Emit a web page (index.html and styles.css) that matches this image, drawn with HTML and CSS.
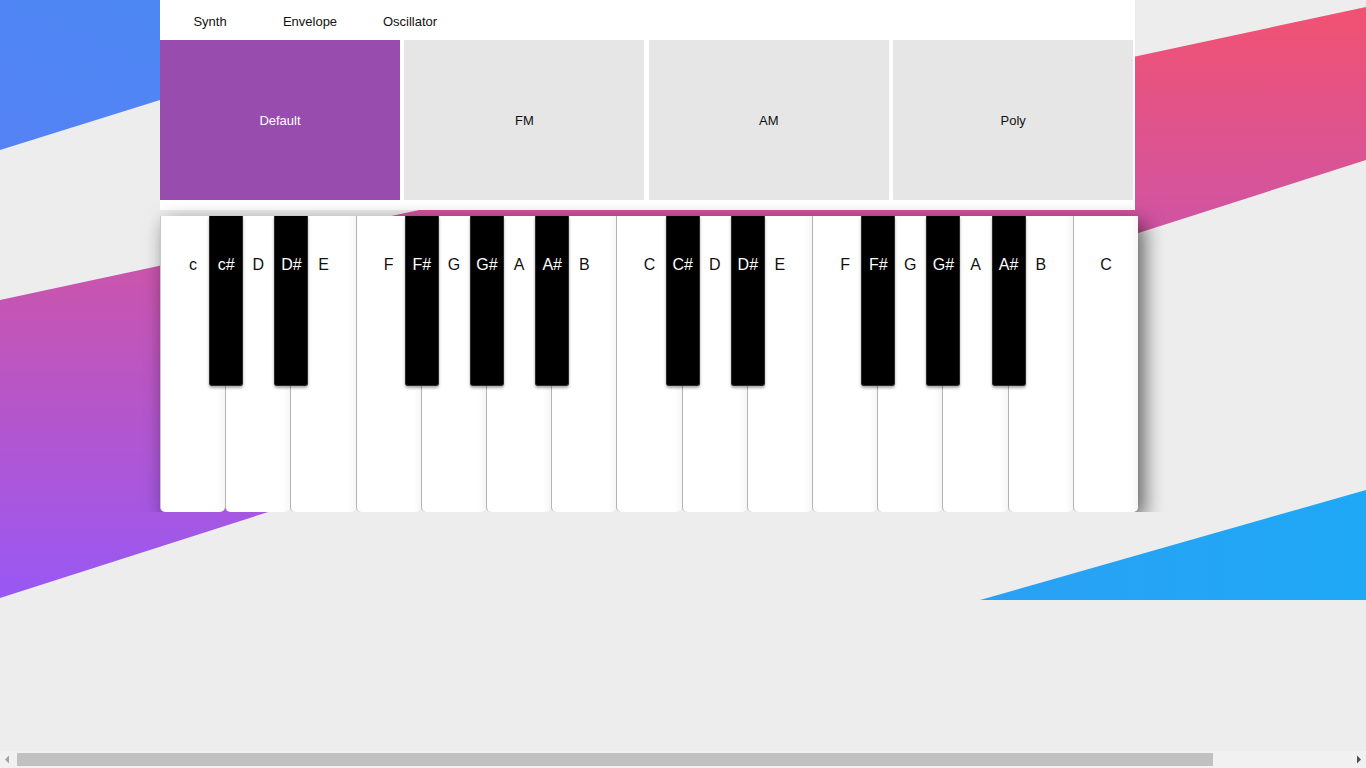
FILE: index.html
```html
<!DOCTYPE html>
<html lang="en">
<head>
<meta charset="utf-8">
<title>Synth</title>
<link rel="stylesheet" href="styles.css">
</head>
<body>
<div class="backdrop">
  <div class="band band-blue-top"></div>
  <div class="band band-pink"></div>
  <div class="band band-blue-bottom"></div>
</div>
<div class="page">
  <div class="panel">
    <nav class="tabs">
      <div class="tab">Synth</div>
      <div class="tab">Envelope</div>
      <div class="tab">Oscillator</div>
    </nav>
    <div class="presets">
      <button class="preset active">Default</button>
      <button class="preset">FM</button>
      <button class="preset">AM</button>
      <button class="preset">Poly</button>
    </div>
  </div>
  <div class="piano">
    <div class="white"><span class="label">c</span><div class="black"><span class="label">c#</span></div></div>
    <div class="white"><span class="label">D</span><div class="black"><span class="label">D#</span></div></div>
    <div class="white"><span class="label">E</span></div>
    <div class="white"><span class="label">F</span><div class="black"><span class="label">F#</span></div></div>
    <div class="white"><span class="label">G</span><div class="black"><span class="label">G#</span></div></div>
    <div class="white"><span class="label">A</span><div class="black"><span class="label">A#</span></div></div>
    <div class="white"><span class="label">B</span></div>
    <div class="white"><span class="label">C</span><div class="black"><span class="label">C#</span></div></div>
    <div class="white"><span class="label">D</span><div class="black"><span class="label">D#</span></div></div>
    <div class="white"><span class="label">E</span></div>
    <div class="white"><span class="label">F</span><div class="black"><span class="label">F#</span></div></div>
    <div class="white"><span class="label">G</span><div class="black"><span class="label">G#</span></div></div>
    <div class="white"><span class="label">A</span><div class="black"><span class="label">A#</span></div></div>
    <div class="white"><span class="label">B</span></div>
    <div class="white"><span class="label">C</span></div>
  </div>
</div>
<div class="hscroll">
  <div class="hscroll-btn">
    <svg width="17" height="17" viewBox="0 0 17 17"><polygon points="5,8.5 9,4.5 9,12.5" fill="#a3a3a3"/></svg>
  </div>
  <div class="hscroll-track"><div class="hscroll-thumb"></div></div>
  <div class="hscroll-btn">
    <svg width="17" height="17" viewBox="0 0 17 17"><polygon points="8,4.5 12,8.5 8,12.5" fill="#505050"/></svg>
  </div>
</div>
</body>
</html>
```

FILE: styles.css
```css
html {
  background: #ededed;
}
body {
  margin: 0;
  font-family: "Liberation Sans", Arial, sans-serif;
  color: #111;
}
.backdrop {
  position: absolute;
  left: 0;
  top: 0;
  width: 1366px;
  height: 600px;
  z-index: 0;
}
.band {
  position: absolute;
  inset: 0;
}
.band-blue-top {
  background: linear-gradient(to top right, #6676f6 0%, #3896f2 100%);
  clip-path: polygon(0 0, 480px 0, 0 150px);
}
.band-pink {
  background: linear-gradient(to bottom, #f25270 0%, #9858f5 100%);
  clip-path: polygon(0 300px, 1366px 7px, 1366px 160px, 0 598px);
}
.band-blue-bottom {
  background: linear-gradient(to right, #4a8cf0 0%, #1ea8f5 100%);
  clip-path: polygon(980px 600px, 1366px 490px, 1366px 600px);
}
.page {
  position: relative;
  z-index: 1;
  padding-left: 160px;
}
.panel {
  width: 975px;
  background: #fff;
  padding-bottom: 10px;
}
.tabs {
  display: flex;
  height: 40px;
}
.tab {
  width: 100px;
  font-size: 13px;
  line-height: 43px;
  text-align: center;
  color: #111;
}
.presets {
  display: flex;
  gap: 4.4px;
}
.preset {
  width: 240px;
  height: 160px;
  border: 0;
  margin: 0;
  padding: 0;
  background: #e6e6e6;
  font-family: "Liberation Sans", Arial, sans-serif;
  font-size: 13px;
  color: #111;
}
.preset.active {
  background: #974cae;
  color: #fff;
}
.piano {
  display: flex;
  width: 978px;
  height: 296px;
  margin-top: 6px;
  box-shadow: 6px 7px 20px rgba(0, 0, 0, 0.6);
  border-radius: 0 0 5px 5px;
}
.white {
  position: relative;
  flex: 1 1 0;
  box-sizing: border-box;
  border-left: 1px solid #b4b4b4;
  border-radius: 0 0 5px 5px;
  background: linear-gradient(to right, #fff 0%, #fff 88%, #f6f6f6 100%);
  text-align: center;
}
.white:first-child {
  border-left-color: #c8c8c8;
}
.label {
  display: block;
  padding-top: 40px;
  font-size: 16px;
  line-height: 18px;
}
.black {
  position: absolute;
  top: 0;
  right: -18px;
  width: 34px;
  height: 170px;
  box-sizing: border-box;
  background: #000;
  border: 1px solid #2a2a2a;
  border-top: 0;
  border-radius: 0 0 3px 3px;
  box-shadow: 0 2px 3px rgba(0, 0, 0, 0.35);
  z-index: 2;
  color: #fff;
}
.black .label {
  color: #fff;
}
.hscroll {
  position: fixed;
  left: 0;
  right: 0;
  bottom: 0;
  height: 17px;
  display: flex;
  background: #f1f1f1;
  z-index: 5;
}
.hscroll-btn {
  width: 17px;
  height: 17px;
  flex: none;
}
.hscroll-btn svg {
  display: block;
}
.hscroll-track {
  flex: 1;
  padding: 2px 0;
  box-sizing: border-box;
}
.hscroll-thumb {
  width: 1196px;
  height: 13px;
  background: #c1c1c1;
}
```
